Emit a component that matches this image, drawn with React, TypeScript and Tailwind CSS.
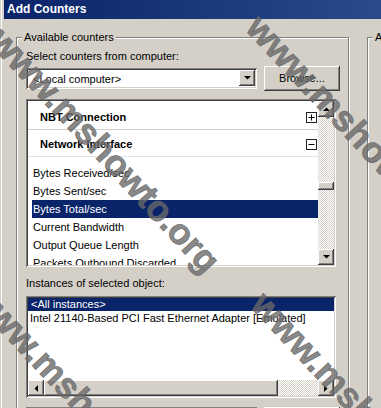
import React from 'react';

const raised =
  'shadow-[inset_-1px_-1px_0_#404040,inset_1px_1px_0_#ffffff,inset_-2px_-2px_0_#808080,inset_2px_2px_0_#d4d0c8] bg-[#d4d0c8]';
const sunken =
  'shadow-[inset_1px_1px_0_#808080,inset_-1px_-1px_0_#ffffff,inset_2px_2px_0_#404040,inset_-2px_-2px_0_#d4d0c8] p-[2px]';
const dither =
  'bg-[repeating-conic-gradient(#d4d0c8_0%_25%,#ffffff_0%_50%)] [background-size:2px_2px]';

const Arrow = ({ dir }: { dir: 'up' | 'down' | 'left' | 'right' }) => {
  const pts = {
    up: '0,4 7,4 3.5,0.5',
    down: '0,0 7,0 3.5,3.5',
    left: '4,0 4,7 0.5,3.5',
    right: '0,0 0,7 3.5,3.5',
  }[dir];
  const vertical = dir === 'up' || dir === 'down';
  return (
    <svg width={vertical ? 7 : 4} height={vertical ? 4 : 7} viewBox={vertical ? '0 0 7 4' : '0 0 4 7'}>
      <polygon points={pts} fill="#000" />
    </svg>
  );
};

const ArrowButton = ({ dir }: { dir: 'up' | 'down' | 'left' | 'right' }) => (
  <div className={`w-[16px] h-[16px] shrink-0 flex items-center justify-center ${raised}`}>
    <Arrow dir={dir} />
  </div>
);

const ToggleBox = ({ open }: { open: boolean }) => (
  <svg width="11" height="11" viewBox="0 0 11 11">
    <rect x="0.5" y="0.5" width="10" height="10" fill="#fff" stroke="#202020" />
    <line x1="2.5" y1="5.5" x2="8.5" y2="5.5" stroke="#000" />
    {!open && <line x1="5.5" y1="2.5" x2="5.5" y2="8.5" stroke="#000" />}
  </svg>
);

const GroupBox = ({ label, className, children }: any) => (
  <div
    className={`relative border border-[#808080] shadow-[1px_1px_0_#ffffff,inset_1px_1px_0_#ffffff] ${className}`}
  >
    <span className="absolute -top-[7px] left-[5px] px-[2px] bg-[#d4d0c8] leading-[13px]">{label}</span>
    {children}
  </div>
);

// diagonal site watermark that sits over the whole screenshot
const Watermark = ({ className }: { className: string }) => (
  <div
    className={`absolute pointer-events-none whitespace-nowrap font-bold text-[36px] leading-[36px] text-[#686868]/80 [-webkit-text-stroke:0.6px_#686868] origin-[0_50%] rotate-[47deg] ${className}`}
  >
    www.mshowto.org
  </div>
);

const counters = [
  'Bytes Received/sec',
  'Bytes Sent/sec',
  'Bytes Total/sec',
  'Current Bandwidth',
  'Output Queue Length',
  'Packets Outbound Discarded',
];

export default function App() {
  return (
    <div className="relative w-[381px] h-[408px] overflow-hidden bg-[#d4d0c8] text-black text-[11px] leading-[13px] font-['Liberation_Sans',Arial,sans-serif]">
      <div className="flex h-full">
        {/* window frame */}
        <div className="w-[4px] shrink-0 shadow-[inset_1px_0_0_#d4d0c8,inset_2px_0_0_#ffffff]"></div>

        <div className="flex-1 min-w-0 flex flex-col">
          <div className="h-[19px] shrink-0 bg-gradient-to-r from-[#0a246a] to-[#2a4a8c] pl-[3px] text-white font-bold text-[12px] leading-[19px]">
            Add Counters
          </div>

          <div className="flex pt-[18px] pl-[12px]">
            <GroupBox label="Available counters" className="w-[333px] h-[400px] shrink-0 pl-[9px] pt-[12px]">
              <div>Select counters from computer:</div>

              <div className="flex items-center gap-[7px] mt-[3px]">
                <div className={`w-[231px] h-[21px] bg-white flex ${sunken}`}>
                  <div className="flex-1 pl-[5px] leading-[18px]">&lt;Local computer&gt;</div>
                  <ArrowButton dir="down" />
                </div>
                <div className={`w-[76px] h-[25px] flex items-center justify-center ${raised}`}>Browse...</div>
              </div>

              <div className={`mt-[8px] w-[310px] h-[168px] bg-white flex ${sunken}`}>
                <div className="flex-1 min-w-0 overflow-hidden">
                  <div className="h-[29px] flex items-center justify-between pl-[12px] pr-[1px] pt-[4px] border-b border-[#d0d0d0] font-bold">
                    <span>NBT Connection</span>
                    <ToggleBox open={false} />
                  </div>
                  <div className="h-[27px] flex items-center justify-between pl-[12px] pr-[1px] pt-[2px] border-b border-[#e4e4e4] font-bold">
                    <span>Network Interface</span>
                    <ToggleBox open />
                  </div>
                  <div className="h-[7px]"></div>
                  {counters.map((c, i) => (
                    <div
                      key={c}
                      className={`ml-[4px] pl-[1px] h-[18px] leading-[18px] whitespace-nowrap ${
                        i === 2 ? 'bg-[#0a246a] text-white' : ''
                      }`}
                    >
                      {c}
                    </div>
                  ))}
                </div>
                <div className="w-[16px] flex flex-col">
                  <ArrowButton dir="up" />
                  <div className={`flex-1 ${dither}`}>
                    <div className={`mt-[65px] h-[8px] ${raised}`}></div>
                  </div>
                  <ArrowButton dir="down" />
                </div>
              </div>

              <div className="mt-[10px]">Instances of selected object:</div>

              <div className={`mt-[6px] w-[310px] h-[102px] bg-white flex flex-col ${sunken}`}>
                <div className="flex-1 min-h-0 overflow-hidden">
                  <div className="h-[13px] pl-[3px] bg-[#0a246a] text-white">&lt;All instances&gt;</div>
                  <div className="h-[14px] pl-[2px] pt-[1px] whitespace-nowrap">
                    Intel 21140-Based PCI Fast Ethernet Adapter [Emulated]
                  </div>
                </div>
                <div className="h-[16px] flex">
                  <ArrowButton dir="left" />
                  <div className={`w-[234px] ${raised}`}></div>
                  <div className={`flex-1 ${dither}`}></div>
                  <ArrowButton dir="right" />
                </div>
              </div>

              <div className="flex gap-[7px] mt-[9px]">
                <div className={`w-[231px] h-[21px] bg-white ${sunken}`}></div>
                <div className={`w-[76px] h-[25px] ${raised}`}></div>
              </div>
            </GroupBox>

            <GroupBox label="A" className="ml-[18px] w-[200px] h-[400px] shrink-0"></GroupBox>
          </div>
        </div>
      </div>

      <Watermark className="left-[-4px] top-[16px]" />
      <Watermark className="left-[253px] top-[3px]" />
      <Watermark className="left-[-24px] top-[270px]" />
      <Watermark className="left-[258px] top-[280px]" />
    </div>
  );
}
